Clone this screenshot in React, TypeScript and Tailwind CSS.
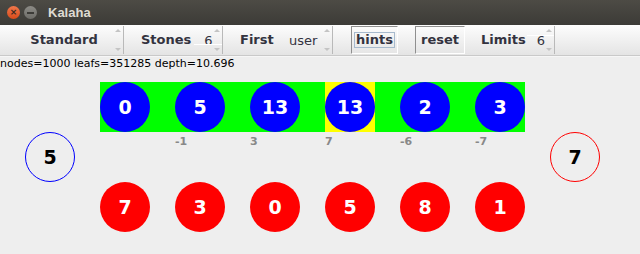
import React from "react";

const dv = { fontFamily: '"DejaVu Sans", "Liberation Sans", sans-serif' };

function Arrows() {
  return (
    <>
      <div className="absolute right-[2px] top-[3px] w-0 h-0 border-l-[3px] border-r-[3px] border-b-[3px] border-l-transparent border-r-transparent border-b-[#c4c4c4]" />
      <div className="absolute right-[2px] bottom-[3px] w-0 h-0 border-l-[3px] border-r-[3px] border-t-[3px] border-l-transparent border-r-transparent border-t-[#c4c4c4]" />
    </>
  );
}

function Circle({ n, bg, text }: { n: number; bg: string; text: string }) {
  return (
    <div className={`w-[50px] h-[50px] rounded-full flex items-center justify-center ${bg}`}>
      <span className={`text-[19px] font-bold leading-none ${text}`} style={dv}>
        {n}
      </span>
    </div>
  );
}

export default function App() {
  const top = [0, 5, 13, 13, 2, 3];
  const bottom = [7, 3, 0, 5, 8, 1];
  const labels = ["", "-1", "3", "7", "-6", "-7"];
  return (
    <div className="w-[640px] h-[254px] bg-[#eeeeee] overflow-hidden" style={dv}>
      {/* title bar */}
      <div className="h-[25px] bg-gradient-to-b from-[#4d4b45] to-[#3c3b37] flex items-center">
        <div className="ml-[7px] w-[13px] h-[13px] rounded-full bg-gradient-to-b from-[#f0774a] to-[#d84a17] flex items-center justify-center">
          <span className="text-[9px] leading-none text-[#3a2a22] font-bold" style={{ fontFamily: '"DejaVu Sans", sans-serif' }}>×</span>
        </div>
        <div className="ml-[4px] w-[13px] h-[13px] rounded-full bg-gradient-to-b from-[#8c8b86] to-[#6e6d68] flex items-center justify-center">
          <div className="w-[7px] h-[2px] bg-[#3c3b37]" />
        </div>
        <span className="ml-[11px] text-[13px] font-bold text-[#dfdbd2]" style={{ fontFamily: '"Liberation Sans", sans-serif' }}>
          Kalaha
        </span>
      </div>
      {/* toolbar */}
      <div className="h-[30px] bg-gradient-to-b from-[#fdfdfd] to-[#e4e4e4] flex items-stretch pl-[5px] text-[13px] font-bold text-[#33333f]">
        <div className="relative w-[119px] border-r border-[#b9b9b9] flex items-center justify-center my-[1px]">
          <span>Standard</span>
          <Arrows />
        </div>
        <div className="ml-[17px] w-[53px] flex items-center">Stones</div>
        <div className="relative w-[29px] border-r border-[#b9b9b9] flex items-center justify-center my-[1px]">
          <div className="absolute left-0 right-0 top-[18px] h-px bg-white" />
          <span className="font-normal text-[13px] pt-[2px] pl-[1px]">6</span>
          <Arrows />
        </div>
        <div className="ml-[17px] w-[40px] flex items-center">First</div>
        <div className="relative w-[53px] border-r border-[#b9b9b9] flex items-center pl-[9px] my-[1px]">
          <span className="font-normal text-[13px] pt-[2px]">user</span>
          <Arrows />
        </div>
        <div className="ml-[18px] my-[1px] w-[47px] border border-[#8f8f8f] border-r-white border-b-white flex items-center justify-center">
          <div className="border border-[#a7bacd] px-[1px] leading-[14px]">hints</div>
        </div>
        <div className="ml-[17px] my-[1px] w-[50px] border border-[#8f8f8f] border-r-white border-b-white flex items-center justify-center">
          reset
        </div>
        <div className="ml-[16px] w-[46px] flex items-center">Limits</div>
        <div className="relative w-[28px] border-r border-[#b9b9b9] flex items-center justify-center my-[1px]">
          <div className="absolute left-0 right-0 top-[9px] h-px bg-white" />
          <span className="font-normal text-[13px] pt-[2px] pl-[1px]">6</span>
          <Arrows />
        </div>
      </div>
      <div className="h-px bg-[#c9c9c9]" />
      <div className="h-px bg-[#f6f6f6]" />
      {/* status */}
      <div className="text-[11px] leading-[13px] text-black">nodes=1000 leafs=351285 depth=10.696</div>
      {/* board */}
      <div className="mt-[12px] flex">
        <div className="w-[100px] flex items-center justify-center">
          <div className="w-[50px] h-[50px] rounded-full border border-[#0000ff] flex items-center justify-center">
            <span className="text-[19px] font-bold leading-none text-black">5</span>
          </div>
        </div>
        <div className="w-[425px] flex flex-col">
          <div className="flex gap-[25px] bg-[#00ff00]">
            {top.map((n, i) => (
              <div key={i} className={i === 3 ? "bg-[#ffff00]" : ""}>
                <Circle n={n} bg="bg-[#0000ff]" text="text-white" />
              </div>
            ))}
          </div>
          <div className="h-[50px] flex gap-[25px] pt-[4px]">
            {labels.map((l, i) => (
              <div key={i} className="w-[50px] text-[11px] font-bold leading-[12px] text-[#888888]">
                {l}
              </div>
            ))}
          </div>
          <div className="flex gap-[25px]">
            {bottom.map((n, i) => (
              <Circle key={i} n={n} bg="bg-[#ff0000]" text="text-white" />
            ))}
          </div>
        </div>
        <div className="w-[100px] flex items-center justify-center">
          <div className="w-[50px] h-[50px] rounded-full border border-[#ff0000] flex items-center justify-center">
            <span className="text-[19px] font-bold leading-none text-black">7</span>
          </div>
        </div>
      </div>
    </div>
  );
}
